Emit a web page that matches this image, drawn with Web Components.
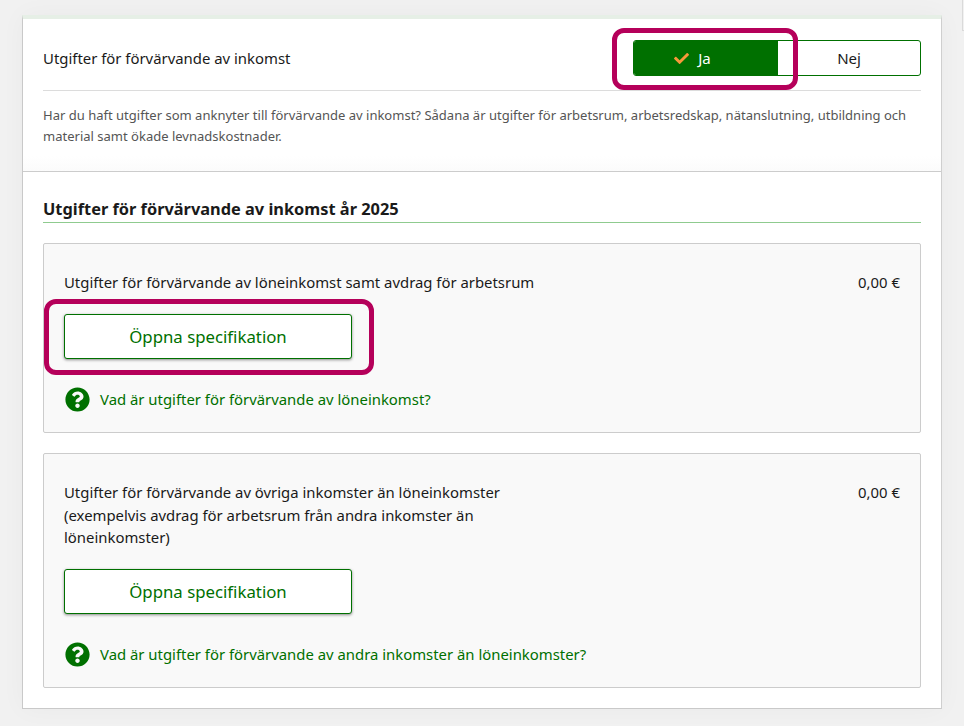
<!DOCTYPE html>
<html lang="sv">
<head>
<meta charset="utf-8">
<title>Utgifter för förvärvande av inkomst</title>
<style>
  html, body { margin: 0; padding: 0; height: 100%; overflow: hidden; }
  body {
    background: #f1f1f1;
    font-family: "Noto Sans", "Open Sans", sans-serif;
    color: #1a1a1a;
  }
  /* resten av ett avklippt element i övre högra hörnet */
  body::after {
    content: "";
    position: absolute;
    top: 0;
    right: 0;
    width: 2px;
    height: 31px;
    box-sizing: border-box;
    border-left: 1px solid #dadada;
    border-bottom: 1px solid #dadada;
  }
</style>
</head>
<body>
<tax-card>
  <yes-no-row slot="top" label="Utgifter för förvärvande av inkomst"></yes-no-row>
  <p slot="top-text">Har du haft utgifter som anknyter till förvärvande av inkomst? Sådana är utgifter för arbetsrum, arbetsredskap, nätanslutning, utbildning och material samt ökade levnadskostnader.</p>
  <section-title>Utgifter för förvärvande av inkomst år 2025</section-title>
  <expense-panel amount="0,00 €" link="Vad är utgifter för förvärvande av löneinkomst?" marked>
    Utgifter för förvärvande av löneinkomst samt avdrag för arbetsrum
  </expense-panel>
  <expense-panel amount="0,00 €" link="Vad är utgifter för förvärvande av andra inkomster än löneinkomster?">
    Utgifter för förvärvande av övriga inkomster än löneinkomster (exempelvis avdrag för arbetsrum från andra inkomster än löneinkomster)
  </expense-panel>
</tax-card>

<script>
// Kortet med toppdel och innehåll
class TaxCard extends HTMLElement {
  constructor() {
    super();
    this.attachShadow({ mode: 'open' });
    this.shadowRoot.innerHTML = `
      <style>
        :host {
          display: block;
          box-sizing: border-box;
          width: 920px;
          margin: 15px 0 0 22px;
          background: #fff;
          border: 1px solid #c9c9c9;
          border-top: 4px solid #e6efe6;
          border-right-color: #cfcfcf;
          box-shadow: 0 0 24px rgba(0,0,0,0.035);
        }
        .top {
          padding: 21px 20px 24px 20px;
          border-bottom: 1px solid #cccccc;
          background: linear-gradient(to bottom, #fff 90%, #fbfbfb);
        }
        ::slotted(p) {
          margin: 14px 0 0 0;
          font-size: 13.03px;
          line-height: 21px;
          color: #555;
        }
        .content {
          padding: 24px 20px 20px 20px;
          display: flex;
          flex-direction: column;
          gap: 20px;
        }
      </style>
      <div class="top">
        <slot name="top"></slot>
        <slot name="top-text"></slot>
      </div>
      <div class="content"><slot></slot></div>
    `;
  }
}

// Rubrik + Ja/Nej
class YesNoRow extends HTMLElement {
  constructor() {
    super();
    this.attachShadow({ mode: 'open' });
    this.shadowRoot.innerHTML = `
      <style>
        :host {
          display: flex;
          justify-content: space-between;
          align-items: flex-start;
          height: 50px;
          border-bottom: 1px solid #dcdcdc;
          position: relative;
          font-size: 14.9px;
        }
        .label { line-height: 36px; }
        .toggle {
          display: flex;
          width: 288px;
          height: 36px;
          box-sizing: border-box;
          border: 1px solid #007000;
          border-radius: 3px;
          overflow: hidden;
        }
        .opt {
          flex: 1;
          display: flex;
          align-items: center;
          justify-content: center;
          gap: 9px;
          font-size: 15px;
        }
        .on {
          background: #007000;
          color: #fff;
          flex: 0 0 144px;
          box-sizing: border-box;
          padding-right: 27px;
        }
        .mark {
          position: absolute;
          left: 569px;
          top: -12px;
          width: 186px;
          height: 62px;
          box-sizing: border-box;
          border: 5px solid #b5005a;
          border-radius: 12px;
        }
      </style>
      <span class="label"></span>
      <div class="toggle">
        <div class="opt on">
          <svg width="15" height="15" viewBox="0 0 512 512"><path fill="#f7983a" d="M173.898 439.404l-166.4-166.4c-9.997-9.997-9.997-26.206 0-36.204l36.203-36.204c9.997-9.998 26.207-9.998 36.204 0L192 312.69 432.095 72.596c9.997-9.997 26.207-9.997 36.204 0l36.203 36.204c9.997 9.997 9.997 26.206 0 36.204l-294.4 294.401c-9.998 9.997-26.207 9.997-36.204-.001z"/></svg>
          <span>Ja</span>
        </div>
        <div class="opt">Nej</div>
      </div>
      <div class="mark"></div>
    `;
    this.shadowRoot.querySelector('.label').textContent = this.getAttribute('label');
  }
}

class SectionTitle extends HTMLElement {
  constructor() {
    super();
    this.attachShadow({ mode: 'open' });
    this.shadowRoot.innerHTML = `
      <style>
        :host {
          display: block;
          font-size: 16.37px;
          font-weight: 700;
          line-height: 26px;
          border-bottom: 1px solid #8fcb8f;
          color: #1a1a1a;
        }
      </style>
      <slot></slot>
    `;
  }
}

// Panel med belopp, knapp och hjälplänk
class ExpensePanel extends HTMLElement {
  constructor() {
    super();
    this.attachShadow({ mode: 'open' });
    this.shadowRoot.innerHTML = `
      <style>
        :host {
          display: block;
          background: #f9f9f9;
          border: 1px solid #cccccc;
          border-radius: 2px;
          padding: 27px 20px 21px 20px;
          font-size: 14.88px;
          line-height: 22.5px;
        }
        .head { display: flex; justify-content: space-between; }
        .text { width: 480px; }
        :host([marked]) .text { width: auto; }
        .btn-wrap { position: relative; width: 288px; margin-top: 20.5px; }
        button {
          display: block;
          width: 288px;
          height: 45px;
          background: #fff;
          border: 1px solid #007000;
          border-radius: 3px;
          box-shadow: 0 1px 3px rgba(0,0,0,0.45);
          color: #007000;
          font: 16.8px "Noto Sans", "Open Sans", sans-serif;
          padding: 0;
        }
        .mark {
          display: none;
          position: absolute;
          left: -20px;
          top: -15px;
          width: 330px;
          height: 76px;
          box-sizing: border-box;
          border: 5px solid #b5005a;
          border-radius: 12px;
        }
        :host([marked]) .mark { display: block; }
        .help {
          display: flex;
          align-items: center;
          gap: 10px;
          margin-top: 28px;
          color: #007000;
          height: 24px;
        }
        .help svg { flex: none; margin-left: 1px; }
      </style>
      <div class="head">
        <div class="text"><slot></slot></div>
        <div class="amount"></div>
      </div>
      <div class="btn-wrap">
        <button type="button">Öppna specifikation</button>
        <div class="mark"></div>
      </div>
      <div class="help">
        <svg width="25" height="25" viewBox="0 0 512 512"><path fill="#007000" d="M504 256c0 136.997-111.043 248-248 248S8 392.997 8 256C8 119.083 119.043 8 256 8s248 111.083 248 248zM262.655 90c-54.497 0-89.255 22.957-116.549 63.758-3.536 5.286-2.353 12.415 2.715 16.258l34.699 26.31c5.205 3.947 12.621 3.008 16.665-2.122 17.864-22.658 30.113-35.797 57.303-35.797 20.429 0 45.698 13.148 45.698 32.958 0 14.976-12.363 22.667-32.534 33.976C247.128 238.528 216 254.941 216 296v4c0 6.627 5.373 12 12 12h56c6.627 0 12-5.373 12-12v-1.333c0-28.462 83.186-29.647 83.186-106.667 0-58.002-60.165-102-116.531-102zM256 338c-25.365 0-46 20.635-46 46 0 25.364 20.635 46 46 46s46-20.636 46-46c0-25.365-20.635-46-46-46z"/></svg>
        <span class="link"></span>
      </div>
    `;
    this.shadowRoot.querySelector('.amount').textContent = this.getAttribute('amount');
    this.shadowRoot.querySelector('.link').textContent = this.getAttribute('link');
  }
}

customElements.define('tax-card', TaxCard);
customElements.define('yes-no-row', YesNoRow);
customElements.define('section-title', SectionTitle);
customElements.define('expense-panel', ExpensePanel);
</script>
</body>
</html>
